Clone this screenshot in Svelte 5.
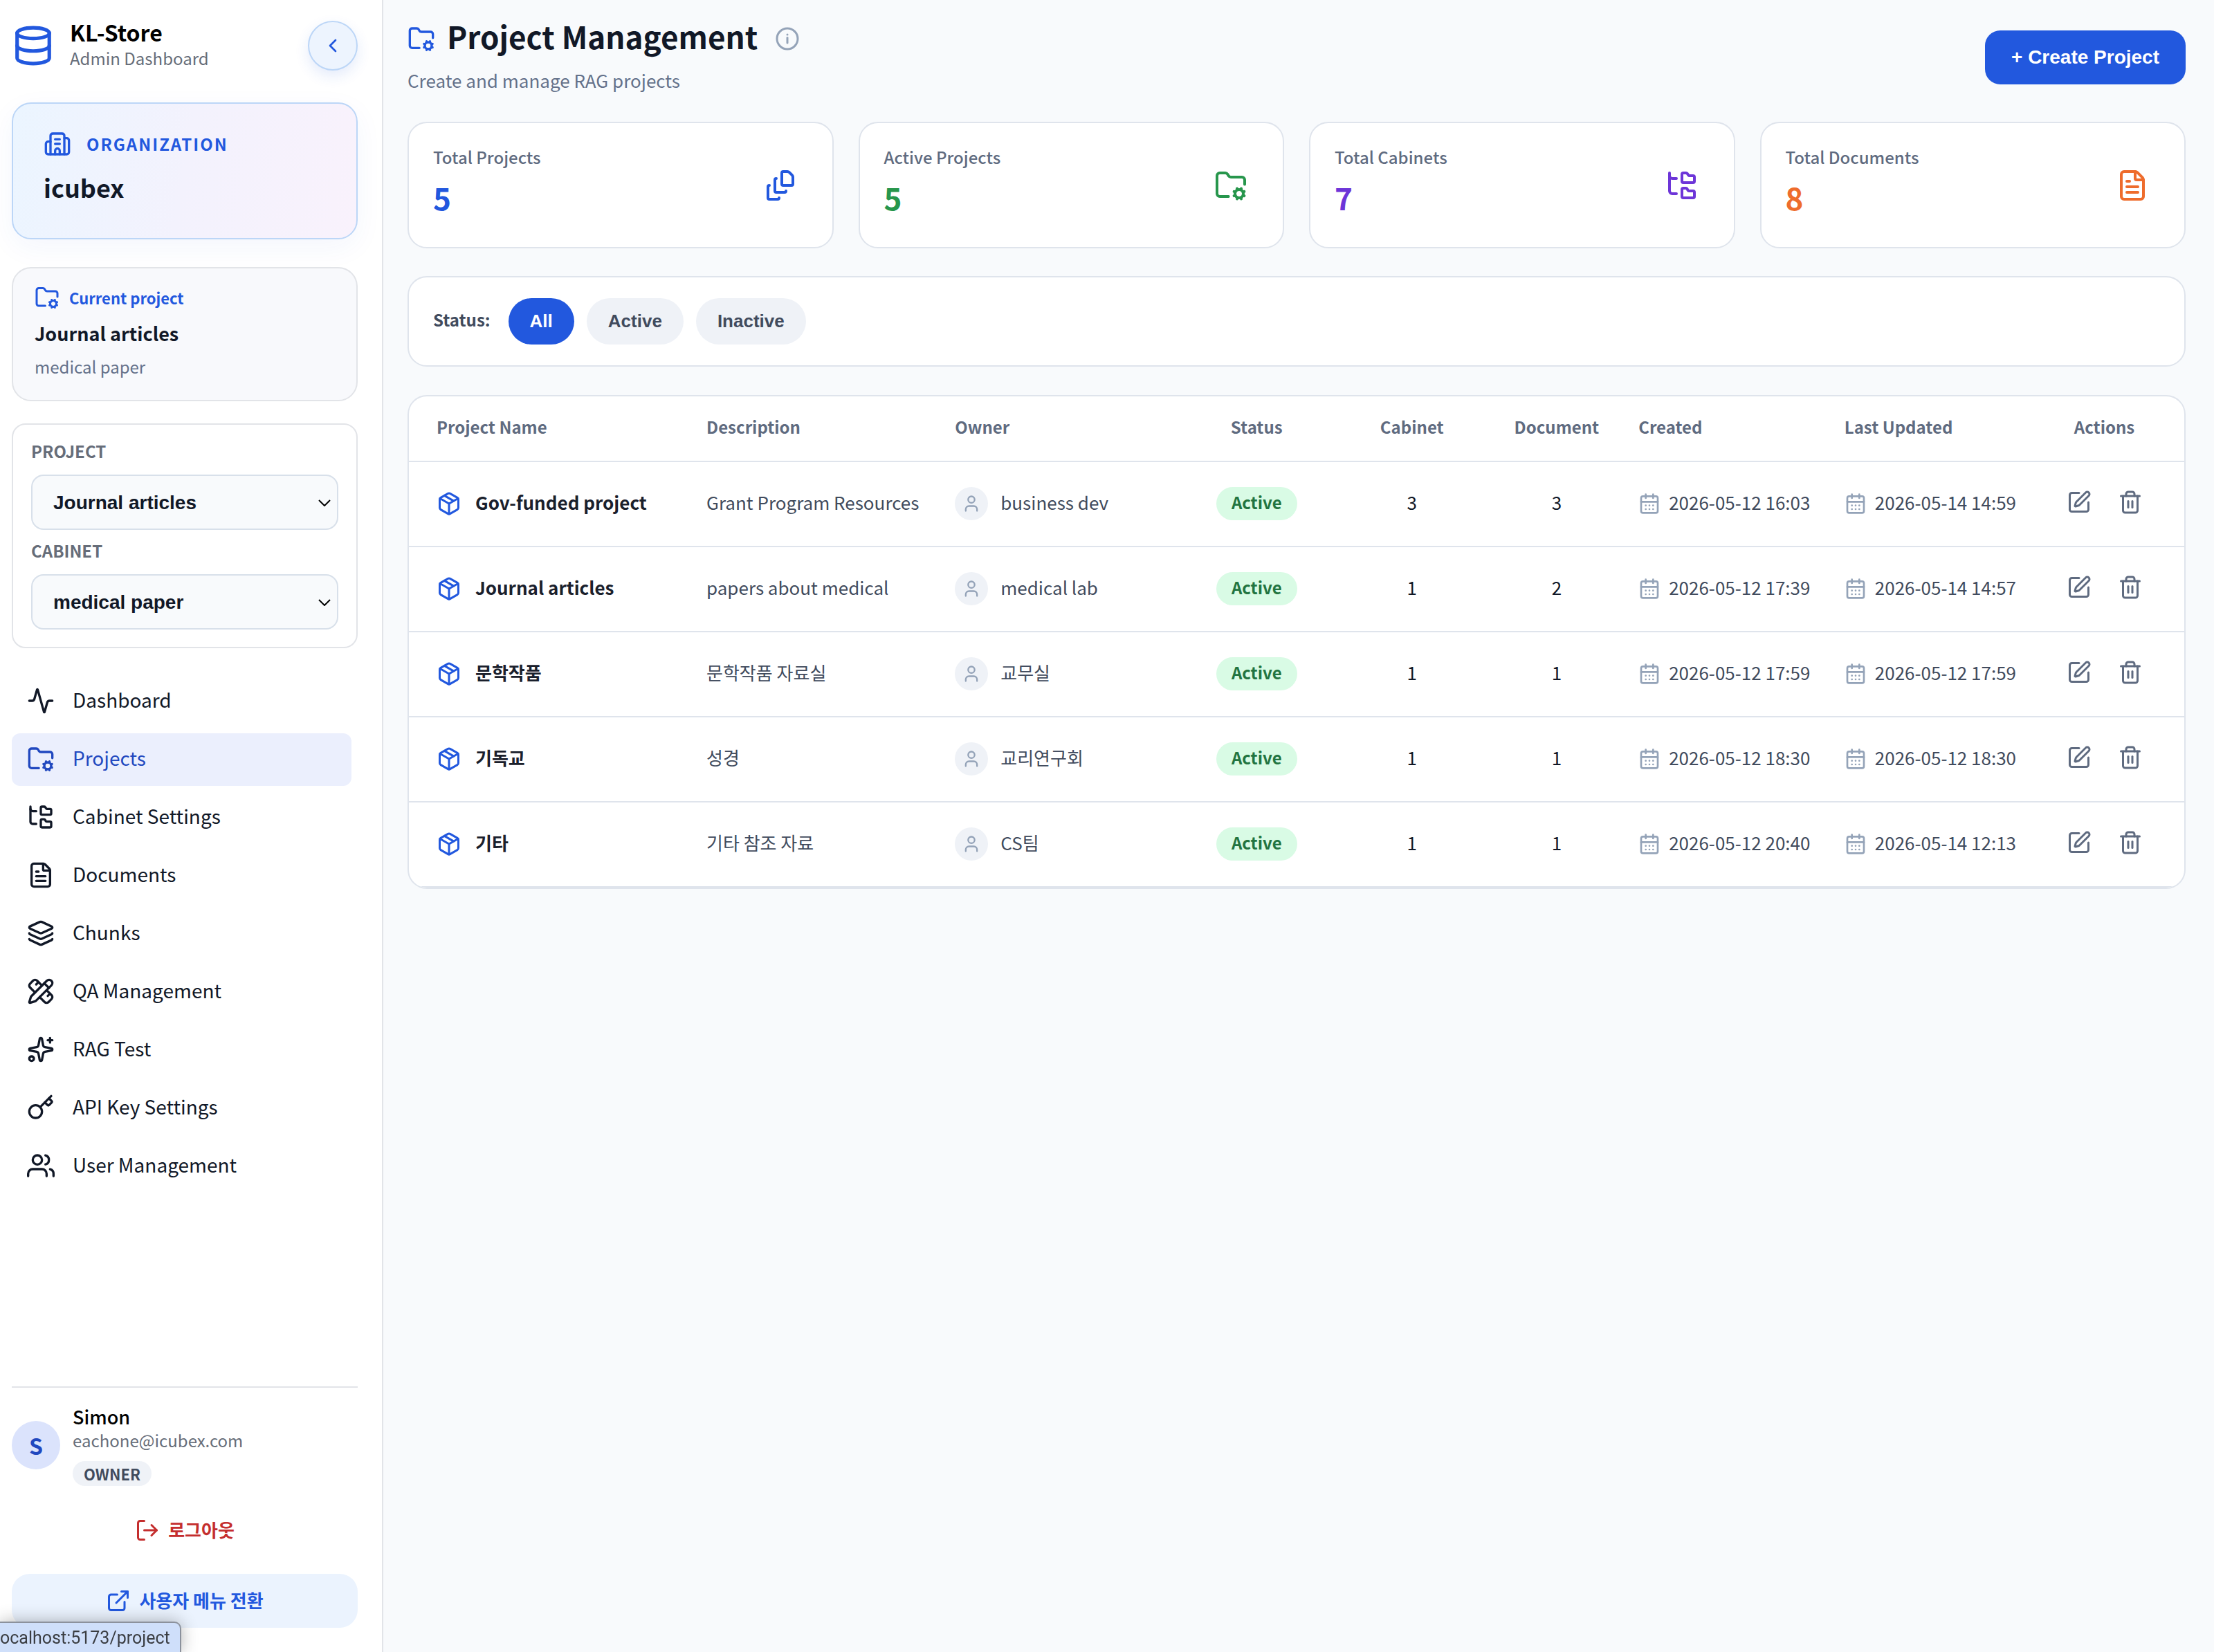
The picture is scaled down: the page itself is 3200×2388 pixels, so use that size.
<script lang="ts">
  type Shape = { paths: string[]; circles?: number[][] };

  const ICONS: Record<string, Shape> = {
    database: {
      paths: [
        "M3 5a9 3 0 1 0 18 0a9 3 0 1 0-18 0",
        "M3 5v14a9 3 0 0 0 18 0V5",
        "M3 12a9 3 0 0 0 18 0",
      ],
    },
    chevronLeft: { paths: ["m15 18-6-6 6-6"] },
    building: {
      paths: [
        "M10 12h4",
        "M10 8h4",
        "M14 21v-3a2 2 0 0 0-4 0v3",
        "M6 10H4a2 2 0 0 0-2 2v7a2 2 0 0 0 2 2h16a2 2 0 0 0 2-2V9a2 2 0 0 0-2-2h-2",
        "M6 21V5a2 2 0 0 1 2-2h8a2 2 0 0 1 2 2v16",
      ],
    },
    folderCog: {
      paths: [
        "M10.3 20H4a2 2 0 0 1-2-2V5a2 2 0 0 1 2-2h3.98a2 2 0 0 1 1.69.9l.66 1.2A2 2 0 0 0 12 6h8a2 2 0 0 1 2 2v3.3",
        "m14.305 19.53.923-.382",
        "m15.228 16.852-.923-.383",
        "m16.852 15.228-.383-.923",
        "m16.852 20.772-.383.924",
        "m19.148 15.228.383-.923",
        "m19.53 21.696-.382-.924",
        "m20.772 16.852.924-.383",
        "m20.772 19.148.924.383",
      ],
      circles: [[18, 18, 3]],
    },
    activity: {
      paths: [
        "M22 12h-2.48a2 2 0 0 0-1.93 1.46l-2.35 8.36a.25.25 0 0 1-.48 0L9.24 2.18a.25.25 0 0 0-.48 0l-2.35 8.36A2 2 0 0 1 4.49 12H2",
      ],
    },
    folderTree: {
      paths: [
        "M20 10a1 1 0 0 0 1-1V6a1 1 0 0 0-1-1h-2.5a1 1 0 0 1-.8-.4l-.9-1.2A1 1 0 0 0 15 3h-2a1 1 0 0 0-1 1v5a1 1 0 0 0 1 1Z",
        "M20 21a1 1 0 0 0 1-1v-3a1 1 0 0 0-1-1h-2.9a1 1 0 0 1-.88-.55l-.42-.85a1 1 0 0 0-.92-.6H13a1 1 0 0 0-1 1v5a1 1 0 0 0 1 1Z",
        "M3 5a2 2 0 0 0 2 2h3",
        "M3 3v13a2 2 0 0 0 2 2h3",
      ],
    },
    fileText: {
      paths: [
        "M6 22a2 2 0 0 1-2-2V4a2 2 0 0 1 2-2h8a2.4 2.4 0 0 1 1.704.706l3.588 3.588A2.4 2.4 0 0 1 20 8v12a2 2 0 0 1-2 2z",
        "M14 2v5a1 1 0 0 0 1 1h5",
        "M10 9H8",
        "M16 13H8",
        "M16 17H8",
      ],
    },
    fileStack: {
      paths: [
        "M11 21a1 1 0 0 1-1 1H4a1 1 0 0 1-1-1v-8a1 1 0 0 1 1-1",
        "M16 16a1 1 0 0 1-1 1H9a1 1 0 0 1-1-1V8a1 1 0 0 1 1-1",
        "M21 6a2 2 0 0 0-.586-1.414l-2-2A2 2 0 0 0 17 2h-3a1 1 0 0 0-1 1v8a1 1 0 0 0 1 1h6a1 1 0 0 0 1-1z",
      ],
    },
    layers: {
      paths: [
        "M12.83 2.18a2 2 0 0 0-1.66 0L2.6 6.08a1 1 0 0 0 0 1.83l8.58 3.91a2 2 0 0 0 1.66 0l8.58-3.9a1 1 0 0 0 0-1.83z",
        "M2 12a1 1 0 0 0 .58.91l8.6 3.91a2 2 0 0 0 1.65 0l8.58-3.9A1 1 0 0 0 22 12",
        "M2 17a1 1 0 0 0 .58.91l8.6 3.91a2 2 0 0 0 1.65 0l8.58-3.9A1 1 0 0 0 22 17",
      ],
    },
    pencilRuler: {
      paths: [
        "M13 7 8.7 2.7a2.41 2.41 0 0 0-3.4 0L2.7 5.3a2.41 2.41 0 0 0 0 3.4L7 13",
        "m8 6 2-2",
        "m18 16 2-2",
        "m17 11 4.3 4.3c.94.94.94 2.46 0 3.4l-2.6 2.6c-.94.94-2.46.94-3.4 0L11 17",
        "M21.174 6.812a1 1 0 0 0-3.986-3.987L3.842 16.174a2 2 0 0 0-.5.83l-1.321 4.352a.5.5 0 0 0 .623.622l4.353-1.32a2 2 0 0 0 .83-.497z",
        "m15 5 4 4",
      ],
    },
    sparkles: {
      paths: [
        "M11.017 2.814a1 1 0 0 1 1.966 0l1.051 5.558a2 2 0 0 0 1.594 1.594l5.558 1.051a1 1 0 0 1 0 1.966l-5.558 1.051a2 2 0 0 0-1.594 1.594l-1.051 5.558a1 1 0 0 1-1.966 0l-1.051-5.558a2 2 0 0 0-1.594-1.594l-5.558-1.051a1 1 0 0 1 0-1.966l5.558-1.051a2 2 0 0 0 1.594-1.594z",
        "M20 2v4",
        "M22 4h-4",
      ],
      circles: [[4, 20, 2]],
    },
    key: {
      paths: [
        "m15.5 7.5 2.3 2.3a1 1 0 0 0 1.4 0l2.1-2.1a1 1 0 0 0 0-1.4L19 4",
        "m21 2-9.6 9.6",
      ],
      circles: [[7.5, 15.5, 5.5]],
    },
    users: {
      paths: [
        "M17 21v-2a4 4 0 0 0-4-4H5a4 4 0 0 0-4 4v2",
        "M23 21v-2a4 4 0 0 0-3-3.87",
        "M16 3.13a4 4 0 0 1 0 7.75",
      ],
      circles: [[9, 7, 4]],
    },
    user: {
      paths: ["M19 21v-2a4 4 0 0 0-4-4H9a4 4 0 0 0-4 4v2"],
      circles: [[12, 7, 4]],
    },
    logOut: {
      paths: [
        "m16 17 5-5-5-5",
        "M21 12H9",
        "M9 21H5a2 2 0 0 1-2-2V5a2 2 0 0 1 2-2h4",
      ],
    },
    externalLink: {
      paths: [
        "M15 3h6v6",
        "M10 14 21 3",
        "M18 13v6a2 2 0 0 1-2 2H5a2 2 0 0 1-2-2V8a2 2 0 0 1 2-2h6",
      ],
    },
    info: { paths: ["M12 16v-5", "M12 8h.01"], circles: [[12, 12, 10]] },
    package: {
      paths: [
        "M11 21.73a2 2 0 0 0 2 0l7-4A2 2 0 0 0 21 16V8a2 2 0 0 0-1-1.73l-7-4a2 2 0 0 0-2 0l-7 4A2 2 0 0 0 3 8v8a2 2 0 0 0 1 1.73z",
        "M12 22V12",
        "M3.29 7 12 12l8.71-5",
        "m7.5 4.27 9 5.15",
      ],
    },
    calendar: {
      paths: [
        "M8 2v4",
        "M16 2v4",
        "M5 4h14a2 2 0 0 1 2 2v14a2 2 0 0 1-2 2H5a2 2 0 0 1-2-2V6a2 2 0 0 1 2-2z",
        "M3 10h18",
        "M8 14h.01",
        "M12 14h.01",
        "M16 14h.01",
        "M8 18h.01",
        "M12 18h.01",
        "M16 18h.01",
      ],
    },
    edit: {
      paths: [
        "M12 3H5a2 2 0 0 0-2 2v14a2 2 0 0 0 2 2h14a2 2 0 0 0 2-2v-7",
        "M18.375 2.625a1 1 0 0 1 3 3l-9.013 9.014a2 2 0 0 1-.853.505l-2.873.84a.5.5 0 0 1-.62-.62l.84-2.873a2 2 0 0 1 .506-.852z",
      ],
    },
    trash: {
      paths: [
        "M3 6h18",
        "M19 6v14a2 2 0 0 1-2 2H7a2 2 0 0 1-2-2V6",
        "M8 6V4a2 2 0 0 1 2-2h4a2 2 0 0 1 2 2v2",
        "M10 11v6",
        "M14 11v6",
      ],
    },
  };

  const navItems = [
    { label: "Dashboard", icon: "activity" },
    { label: "Projects", icon: "folderCog" },
    { label: "Cabinet Settings", icon: "folderTree" },
    { label: "Documents", icon: "fileText" },
    { label: "Chunks", icon: "layers" },
    { label: "QA Management", icon: "pencilRuler" },
    { label: "RAG Test", icon: "sparkles" },
    { label: "API Key Settings", icon: "key" },
    { label: "User Management", icon: "users" },
  ];

  const stats = [
    { label: "Total Projects", value: 5, icon: "fileStack", tone: "blue" },
    { label: "Active Projects", value: 5, icon: "folderCog", tone: "green" },
    { label: "Total Cabinets", value: 7, icon: "folderTree", tone: "purple" },
    { label: "Total Documents", value: 8, icon: "fileText", tone: "orange" },
  ];

  const projects = [
    {
      name: "Gov-funded project",
      description: "Grant Program Resources",
      owner: "business dev",
      active: true,
      cabinets: 3,
      documents: 3,
      created: "2026-05-12 16:03",
      updated: "2026-05-14 14:59",
    },
    {
      name: "Journal articles",
      description: "papers about medical",
      owner: "medical lab",
      active: true,
      cabinets: 1,
      documents: 2,
      created: "2026-05-12 17:39",
      updated: "2026-05-14 14:57",
    },
    {
      name: "문학작품",
      description: "문학작품 자료실",
      owner: "교무실",
      active: true,
      cabinets: 1,
      documents: 1,
      created: "2026-05-12 17:59",
      updated: "2026-05-12 17:59",
    },
    {
      name: "기독교",
      description: "성경",
      owner: "교리연구회",
      active: true,
      cabinets: 1,
      documents: 1,
      created: "2026-05-12 18:30",
      updated: "2026-05-12 18:30",
    },
    {
      name: "기타",
      description: "기타 참조 자료",
      owner: "CS팀",
      active: true,
      cabinets: 1,
      documents: 1,
      created: "2026-05-12 20:40",
      updated: "2026-05-14 12:13",
    },
  ];

  const filters = ["All", "Active", "Inactive"];

  let current = $state("Projects");
  let filter = $state("All");

  const visible = $derived(
    projects.filter((p) => filter === "All" || p.active === (filter === "Active"))
  );
</script>

{#snippet icon(name: string, size: string)}
  <svg class="icon {size}" viewBox="0 0 24 24" aria-hidden="true">
    {#each ICONS[name].paths as d}
      <path {d} />
    {/each}
    {#each ICONS[name].circles ?? [] as [cx, cy, r]}
      <circle {cx} {cy} {r} />
    {/each}
  </svg>
{/snippet}

<div class="app">
  <aside>
    <div class="brand">
      <span class="blue">{@render icon("database", "xl")}</span>
      <div class="brand-text">
        <strong>KL-Store</strong>
        <span>Admin Dashboard</span>
      </div>
      <button class="collapse" aria-label="Collapse sidebar">
        {@render icon("chevronLeft", "sm")}
      </button>
    </div>

    <section class="org">
      <div class="org-label">{@render icon("building", "lg")} ORGANIZATION</div>
      <div class="org-name">icubex</div>
    </section>

    <section class="current">
      <div class="current-label">{@render icon("folderCog", "md")} Current project</div>
      <div class="current-name">Journal articles</div>
      <div class="current-cabinet">medical paper</div>
    </section>

    <section class="pickers">
      <label for="project">PROJECT</label>
      <div class="select">
        <select id="project"><option>Journal articles</option></select>
        <svg viewBox="0 0 18 10" aria-hidden="true"><path d="m1 1 8 8 8-8" /></svg>
      </div>
      <label for="cabinet">CABINET</label>
      <div class="select">
        <select id="cabinet"><option>medical paper</option></select>
        <svg viewBox="0 0 18 10" aria-hidden="true"><path d="m1 1 8 8 8-8" /></svg>
      </div>
    </section>

    <nav>
      {#each navItems as item (item.label)}
        <a
          href="#{item.icon}"
          class:selected={current === item.label}
          onclick={() => (current = item.label)}
        >
          {@render icon(item.icon, "lg")}
          {item.label}
        </a>
      {/each}
    </nav>

    <footer>
      <div class="account">
        <div class="avatar">S</div>
        <div class="account-text">
          <strong>Simon</strong>
          <span>eachone@icubex.com</span>
          <em>OWNER</em>
        </div>
      </div>
      <button class="logout">{@render icon("logOut", "md")} 로그아웃</button>
      <button class="switch">{@render icon("externalLink", "md")} 사용자 메뉴 전환</button>
    </footer>
  </aside>

  <main>
    <header>
      <div class="heading">
        <h1>
          <span class="blue">{@render icon("folderCog", "lg")}</span>
          Project Management
          <button class="info" aria-label="About projects">{@render icon("info", "md")}</button>
        </h1>
        <p>Create and manage RAG projects</p>
      </div>
      <button class="create">+ Create Project</button>
    </header>

    <section class="stats">
      {#each stats as stat (stat.label)}
        <div class="card stat {stat.tone}">
          <div class="stat-text">
            <div class="stat-label">{stat.label}</div>
            <div class="stat-value">{stat.value}</div>
          </div>
          {@render icon(stat.icon, "stat-icon")}
        </div>
      {/each}
    </section>

    <section class="card filters">
      <span>Status:</span>
      {#each filters as name (name)}
        <button class:on={filter === name} onclick={() => (filter = name)}>{name}</button>
      {/each}
    </section>

    <section class="card list">
      <table>
        <colgroup>
          <col class="c-name" />
          <col class="c-description" />
          <col class="c-owner" />
          <col class="c-status" />
          <col class="c-cabinet" />
          <col class="c-document" />
          <col class="c-created" />
          <col class="c-updated" />
          <col class="c-actions" />
        </colgroup>
        <thead>
          <tr>
            <th>Project Name</th>
            <th>Description</th>
            <th>Owner</th>
            <th class="center">Status</th>
            <th class="center">Cabinet</th>
            <th class="center">Document</th>
            <th>Created</th>
            <th>Last Updated</th>
            <th class="center">Actions</th>
          </tr>
        </thead>
        <tbody>
          {#each visible as project (project.name)}
            <tr>
              <td>
                <div class="cell name">{@render icon("package", "md")} {project.name}</div>
              </td>
              <td>{project.description}</td>
              <td>
                <div class="cell owner">
                  <span class="face">{@render icon("user", "xs")}</span>
                  {project.owner}
                </div>
              </td>
              <td class="center">
                <span class="badge">{project.active ? "Active" : "Inactive"}</span>
              </td>
              <td class="center count">{project.cabinets}</td>
              <td class="center count">{project.documents}</td>
              <td>
                <div class="cell date">{@render icon("calendar", "sm")} {project.created}</div>
              </td>
              <td>
                <div class="cell date">{@render icon("calendar", "sm")} {project.updated}</div>
              </td>
              <td class="center">
                <div class="actions">
                  <button aria-label="Edit {project.name}">{@render icon("edit", "md")}</button>
                  <button aria-label="Delete {project.name}">{@render icon("trash", "md")}</button>
                </div>
              </td>
            </tr>
          {/each}
        </tbody>
      </table>
    </section>
  </main>

  <div class="link-status">ocalhost:5173/project</div>
</div>

<style>
  :global(body) {
    margin: 0;
    background: #f8fafc;
  }

  .app {
    --blue: #2258de;
    --line: #dfe4ec;
    display: flex;
    min-height: 100vh;
    box-sizing: border-box;
    font-family: "Noto Sans CJK KR", "Noto Sans", sans-serif;
    font-size: 26px;
    line-height: 36px;
    color: #111827;
  }
  .app :global(*) {
    box-sizing: border-box;
  }

  button {
    border: 0;
    padding: 0;
    background: none;
    font-family: inherit;
    color: inherit;
    cursor: pointer;
  }

  .icon {
    display: block;
    flex: none;
    width: 36px;
    height: 36px;
    fill: none;
    stroke: currentColor;
    stroke-width: 2;
    stroke-linecap: round;
    stroke-linejoin: round;
  }
  .icon.xs {
    width: 28px;
    height: 28px;
  }
  .icon.sm {
    width: 32px;
    height: 32px;
  }
  .icon.lg {
    width: 40px;
    height: 40px;
  }
  .icon.xl {
    width: 62px;
    height: 62px;
  }
  .icon.stat-icon {
    width: 48px;
    height: 48px;
  }

  .blue {
    color: var(--blue);
  }
  .green {
    color: #27964c;
  }
  .purple {
    color: #6d35d8;
  }
  .orange {
    color: #ee6c2c;
  }

  /* sidebar */
  aside {
    flex: none;
    display: flex;
    flex-direction: column;
    width: 554px;
    padding: 30px 35px 35px 17px;
    border-right: 2px solid #e2e4e8;
    background: #fff;
  }

  .brand {
    display: flex;
    align-items: center;
    height: 72px;
    margin-bottom: 46px;
  }
  .brand-text {
    flex: 1;
    display: flex;
    flex-direction: column;
    padding: 0 0 4px 22px;
  }
  .brand-text strong {
    font-size: 32px;
    line-height: 40px;
    color: #000;
  }
  .brand-text span {
    font-size: 24px;
    line-height: 36px;
    color: #666d79;
  }
  .collapse {
    display: grid;
    place-items: center;
    width: 72px;
    height: 72px;
    border: 2px solid #bcd6f7;
    border-radius: 50%;
    background: #edf4fe;
    color: var(--blue);
    box-shadow: 0 8px 20px rgba(34, 88, 222, 0.12);
  }

  .org {
    height: 198px;
    padding: 38px 44px;
    margin-bottom: 40px;
    border: 2px solid #bcd6f7;
    border-radius: 28px;
    background: linear-gradient(100deg, #ebf5ff, #f3f2fd 50%, #f9f2fc);
    box-shadow: 0 12px 40px rgba(34, 88, 222, 0.05);
  }
  .org-label {
    display: flex;
    align-items: center;
    gap: 22px;
    font-size: 24px;
    font-weight: 700;
    letter-spacing: 2px;
    color: var(--blue);
  }
  .org-name {
    margin-top: 16px;
    font-size: 36px;
    font-weight: 700;
    line-height: 52px;
  }

  .current {
    height: 194px;
    padding: 24px 31px;
    margin-bottom: 32px;
    border: 2px solid #e2e4e8;
    border-radius: 28px;
    background: #f8f9fc;
  }
  .current-label {
    display: flex;
    align-items: center;
    gap: 14px;
    font-size: 22px;
    font-weight: 700;
    color: var(--blue);
  }
  .current-name {
    margin-top: 12px;
    font-size: 27px;
    font-weight: 700;
    line-height: 44px;
  }
  .current-cabinet {
    margin-top: 8px;
    font-size: 24px;
    color: #64718a;
  }

  .pickers {
    padding: 20px 26px 25px;
    margin-bottom: 39px;
    border: 2px solid #e2e4e8;
    border-radius: 20px;
  }
  .pickers label {
    display: block;
    padding-bottom: 16px;
    font-size: 24px;
    font-weight: 700;
    color: #666d79;
  }
  .select {
    position: relative;
  }
  .select + label {
    padding-top: 12px;
  }
  .select select {
    appearance: none;
    display: block;
    width: 100%;
    height: 80px;
    padding: 0 30px;
    border: 2px solid #d8e0ea;
    border-radius: 18px;
    background: #f8fafc;
    font: 700 28px "Liberation Sans", Arial, sans-serif;
    color: #111827;
  }
  .select svg {
    position: absolute;
    top: 36px;
    right: 11px;
    width: 18px;
    height: 10px;
    fill: none;
    stroke: #000;
    stroke-width: 2;
    pointer-events: none;
  }

  nav {
    display: flex;
    flex-direction: column;
    gap: 8px;
    padding-right: 9px;
  }
  nav a {
    display: flex;
    align-items: center;
    gap: 26px;
    height: 76px;
    padding: 0 22px 6px;
    border-radius: 12px;
    font-size: 28px;
    color: inherit;
    text-decoration: none;
  }
  nav .icon {
    margin-top: 4px;
  }
  nav a.selected {
    background: #ebeffd;
    color: #2148bf;
  }

  footer {
    margin-top: auto;
    border-top: 2px solid #e2e4e8;
    padding-top: 24px;
  }
  .account {
    display: flex;
    align-items: center;
    gap: 18px;
  }
  .avatar {
    display: grid;
    place-items: center;
    width: 70px;
    height: 70px;
    border-radius: 50%;
    background: #dbe3fc;
    font-size: 32px;
    font-weight: 700;
    color: #2148bf;
  }
  .account-text {
    display: flex;
    flex-direction: column;
    align-items: flex-start;
  }
  .account-text strong {
    font-size: 27px;
    font-weight: 500;
    color: #000;
  }
  .account-text span {
    font-size: 24px;
    line-height: 32px;
    color: #666d79;
  }
  .account-text em {
    margin-top: 14px;
    padding: 0 16px;
    border-radius: 20px;
    background: #eff2f7;
    font-size: 22px;
    font-weight: 700;
    font-style: normal;
    color: #414b5d;
  }
  .logout,
  .switch {
    display: flex;
    align-items: center;
    justify-content: center;
    gap: 12px;
    width: 100%;
    height: 78px;
    padding-bottom: 4px;
    border-radius: 26px;
    font-size: 26px;
    font-weight: 700;
  }
  .logout .icon,
  .switch .icon {
    margin-top: 4px;
  }
  .logout {
    margin: 25px 0 24px;
    color: #c42e2e;
  }
  .switch {
    background: #ebf3fe;
    color: var(--blue);
  }

  /* main column */
  main {
    flex: 1;
    min-width: 0;
    padding: 20px 41px 36px 35px;
  }

  header {
    display: flex;
    align-items: center;
    justify-content: space-between;
    margin-bottom: 30px;
  }
  .heading {
    padding-bottom: 8px;
  }
  h1 {
    display: flex;
    align-items: center;
    gap: 17px;
    margin: 0;
    font-size: 44px;
    font-weight: 700;
    line-height: 64px;
  }
  h1 .icon {
    margin-top: 8px;
  }
  .info {
    margin-left: 8px;
    color: #94a3b8;
  }
  header p {
    margin: 10px 0 0;
    color: #64718a;
    line-height: 44px;
  }
  .create {
    height: 78px;
    padding: 0 38px;
    border-radius: 22px;
    background: var(--blue);
    color: #fff;
    font: 700 28px "Liberation Sans", Arial, sans-serif;
  }

  .card {
    border: 2px solid var(--line);
    border-radius: 28px;
    background: #fff;
  }

  .stats {
    display: grid;
    grid-template-columns: repeat(4, 1fr);
    gap: 36px;
    margin-bottom: 40px;
  }
  .stat {
    display: flex;
    align-items: center;
    justify-content: space-between;
    height: 183px;
    padding: 0 51px 0 35px;
  }
  .stat-text {
    padding-bottom: 10px;
  }
  .stat-label {
    font-size: 24px;
    font-weight: 500;
    color: #5f6b80;
  }
  .stat-value {
    margin-top: 8px;
    font-size: 44px;
    font-weight: 700;
    line-height: 64px;
  }

  .filters {
    display: flex;
    align-items: center;
    gap: 18px;
    height: 131px;
    padding: 0 35px;
    margin-bottom: 41px;
  }
  .filters span {
    margin-right: 8px;
    padding-bottom: 6px;
    font-size: 24px;
    font-weight: 700;
    color: #414b5d;
  }
  .filters button {
    height: 67px;
    padding: 0 31px;
    border-radius: 34px;
    background: #eff2f7;
    color: #414b5d;
    font: 700 26px "Liberation Sans", Arial, sans-serif;
  }
  .filters button.on {
    background: var(--blue);
    color: #fff;
  }

  .list {
    overflow: hidden;
  }
  table {
    width: 100%;
    table-layout: fixed;
    border-collapse: separate;
    border-spacing: 0;
  }
  .c-name {
    width: 15.2%;
  }
  .c-description {
    width: 14%;
  }
  .c-owner {
    width: 14.9%;
  }
  .c-status {
    width: 7.3%;
  }
  .c-cabinet {
    width: 10.2%;
  }
  .c-document {
    width: 6.1%;
  }
  .c-created {
    width: 11.6%;
  }
  .c-updated {
    width: 11.7%;
  }
  .c-actions {
    width: 9%;
  }
  th,
  td {
    padding: 0 0 6px 40px;
    border-bottom: 2px solid var(--line);
    text-align: left;
    white-space: nowrap;
  }
  th {
    height: 95px;
    font-size: 24px;
    font-weight: 700;
    color: #5f6b80;
  }
  td {
    height: 123px;
    color: #414b5d;
  }
  .center {
    padding-left: 0;
    text-align: center;
  }
  .count {
    color: #111827;
  }
  .cell {
    display: flex;
    align-items: center;
  }
  .cell > .icon,
  .face {
    margin-top: 4px;
  }
  .name {
    gap: 20px;
    font-weight: 700;
    color: #1a202c;
  }
  .name .icon {
    color: var(--blue);
  }
  .owner {
    gap: 18px;
  }
  .face {
    display: grid;
    place-items: center;
    width: 48px;
    height: 48px;
    border-radius: 50%;
    background: #eff2f7;
    color: #94a3b8;
  }
  .badge {
    display: inline-block;
    margin-top: 4px;
    padding: 4px 22px 8px;
    border-radius: 24px;
    background: #d9fbe5;
    font-size: 24px;
    font-weight: 700;
    color: #227440;
  }
  .date {
    gap: 12px;
  }
  .date .icon {
    color: #94a3b8;
  }
  .actions {
    display: flex;
    justify-content: center;
    gap: 18px;
    color: #5f6b80;
  }
  .actions button {
    display: grid;
    place-items: center;
    width: 56px;
    height: 56px;
  }

  /* browser link preview in the corner */
  .link-status {
    position: fixed;
    left: 0;
    bottom: 0;
    padding: 4px 14px 2px 0;
    border: solid #8b919c;
    border-width: 2px 2px 0 0;
    border-radius: 0 10px 0 0;
    background: #cfdffa;
    box-shadow: 0 0 24px rgba(0, 0, 0, 0.3);
    font-family: Roboto, sans-serif;
    font-size: 25px;
    color: #3a3d42;
  }
</style>
